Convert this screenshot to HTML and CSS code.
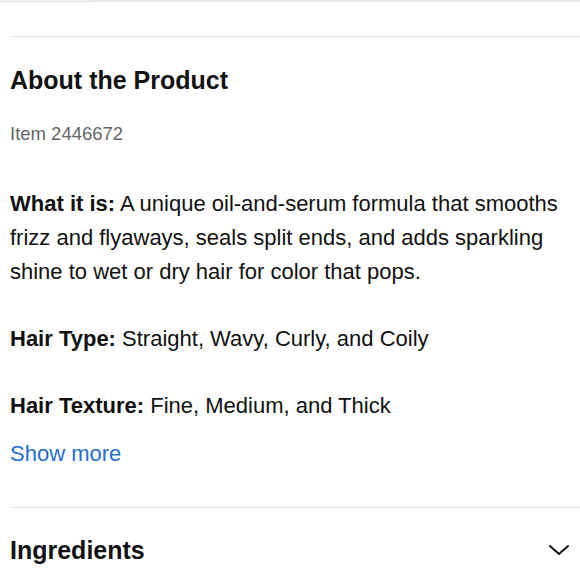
FILE: index.html
```html
<!DOCTYPE html>
<html>
<head>
<meta charset="utf-8">
<link rel="stylesheet" href="styles.css">
</head>
<body>
<div class="topbar"><div class="tab"></div></div>
<div class="content">
  <hr class="divider first">
  <section class="about">
    <h2 class="title">About the Product</h2>
    <p class="item">Item 2446672</p>
    <p class="para"><b>What it is:</b> A unique oil-and-serum formula that smooths frizz and flyaways, seals split ends, and adds sparkling shine to wet or dry hair for color that pops.</p>
    <p class="para"><b>Hair Type:</b> Straight, Wavy, Curly, and Coily</p>
    <p class="para"><b>Hair Texture:</b> Fine, Medium, and Thick</p>
    <a class="more">Show more</a>
  </section>
  <hr class="divider">
  <div class="accordion">
    <h2 class="title">Ingredients</h2>
    <svg class="chev" width="22" height="14" viewBox="0 0 22 14"><path d="M2 3 L11 11 L20 3" fill="none" stroke="#111" stroke-width="2" stroke-linecap="round" stroke-linejoin="round"/></svg>
  </div>
</div>
</body>
</html>
```
FILE: styles.css
```css
html, body { margin: 0; padding: 0; background: #fff; }
body { font-family: "Liberation Sans", Arial, sans-serif; color: #111; width: 580px; height: 580px; overflow: hidden; }
.topbar { height: 2px; background: #e6e6e6; box-shadow: 0 2px 8px rgba(0,0,0,0.08); position: relative; }
.tab { width: 90px; height: 1px; background: #f2f2f2; }
.content { padding-left: 10px; }
.divider { border: 0; height: 1px; background: #e4e4e4; margin: 0; }
.divider.first { margin-top: 34px; }
.title { font-size: 25px; font-weight: bold; margin: 0; line-height: 30px; }
.about .title { margin-top: 28px; }
.item { font-size: 18.5px; color: #666; margin: 27px 0 0; line-height: 24px; }
.para { font-size: 22px; line-height: 34px; margin: 41px 0 0; padding-right: 6px; }
.para + .para { margin-top: 33px; }
.para b { font-weight: bold; }
.more { display: block; font-size: 22px; color: #1f6fd1; margin-top: 14px; line-height: 34px; }
.about + .divider { margin-top: 36px; }
.accordion { display: flex; align-items: center; justify-content: space-between; padding-right: 10px; margin-top: 27px; }
```
